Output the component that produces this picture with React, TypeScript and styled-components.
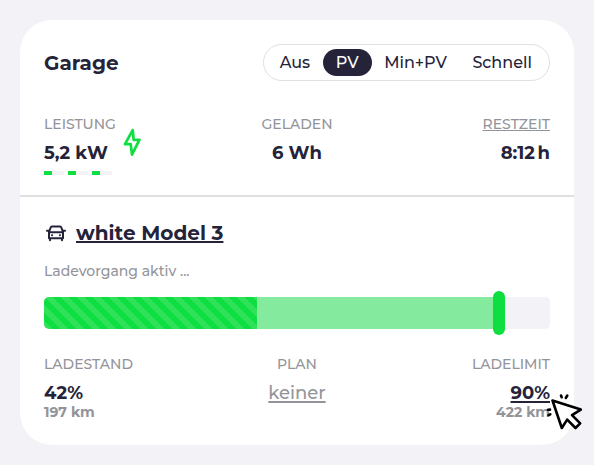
import React from "react";
import styled, { createGlobalStyle } from "styled-components";

const ink = "#24233a";
const gray = "#93949a";
const green = "#0fde41";

const GlobalStyle = createGlobalStyle`
  * { box-sizing: border-box; }
  body {
    margin: 0;
    background: #f2f2f7;
    color: ${ink};
    font-family: Montserrat, Inter, sans-serif;
    overflow: hidden;
  }
`;

const Page = styled.main`
  position: relative;
  width: 594px;
  height: 465px;
  padding: 20px;
`;

const Card = styled.section`
  height: 425px;
  background: #fff;
  border-radius: 32px;
`;

const Loadpoint = styled.div`
  height: 177px;
  padding: 24px 24px 0;
  border-bottom: 2px solid #e0e0e3;
`;

const Vehicle = styled.div`
  padding: 22px 24px 0;
`;

const Header = styled.header`
  display: flex;
  align-items: center;
  justify-content: space-between;
  height: 37px;
`;

const Text = styled.span`
  display: block;
  white-space: nowrap;
`;

const Title = styled(Text)`
  margin: 0;
  font-size: 20px;
  font-weight: 700;
  line-height: 24px;
`;

const ModeGroup = styled.div`
  display: flex;
  align-items: center;
  width: 287px;
  height: 37px;
  padding: 0 4px 0 3px;
  border: 1px solid #e0e0e4;
  border-radius: 19px;
`;

const Mode = styled.button<{ $active?: boolean; $w: number }>`
  display: flex;
  align-items: center;
  justify-content: center;
  width: ${(p) => p.$w}px;
  height: 27px;
  padding: 0;
  border: 0;
  border-radius: 14px;
  background: ${(p) => (p.$active ? ink : "transparent")};
  color: ${(p) => (p.$active ? "#fff" : ink)};
  font: 500 16px/26px Montserrat, Inter, sans-serif;
`;

const Stats = styled.div<{ $top: number }>`
  display: grid;
  grid-template-columns: 1fr 1fr 1fr;
  margin-top: ${(p) => p.$top}px;
`;

const Stat = styled.div<{ $align?: string }>`
  display: flex;
  flex-direction: column;
  align-items: ${(p) => p.$align ?? "flex-start"};
`;

const Label = styled(Text)<{ $underline?: boolean }>`
  color: ${gray};
  font-size: 14px;
  font-weight: 500;
  line-height: 20px;
  text-decoration: ${(p) => (p.$underline ? "underline" : "none")};
  text-decoration-thickness: 1px;
  text-underline-offset: 1px;
`;

const Value = styled(Text)<{ $underline?: boolean }>`
  margin-top: 8px;
  font-size: 18px;
  font-weight: 700;
  line-height: 23px;
  text-decoration: ${(p) => (p.$underline ? "underline" : "none")};
  text-decoration-thickness: 1.5px;
  text-underline-offset: 2px;
`;

const Duration = styled(Value)`
  word-spacing: -2.5px;
`;

const PlanValue = styled(Value)`
  color: ${gray};
  font-weight: 500;
`;

const Range = styled(Text)`
  margin-top: -1px;
  color: ${gray};
  font-size: 14px;
  font-weight: 700;
  line-height: 16px;
`;

const PowerRow = styled.div`
  display: flex;
  gap: 7px;
`;

const BoltIcon = styled.svg`
  width: 18px;
  height: 28px;
  margin-top: 14px;
`;

const Phases = styled.div`
  display: flex;
  gap: 4px;
  margin-top: 6px;
`;

const Phase = styled.i`
  width: 20px;
  height: 4px;
  background: linear-gradient(90deg, ${green} 8px, #f3f3f6 8px);
`;

const VehicleRow = styled.div`
  display: flex;
  align-items: center;
  gap: 8px;
  height: 28px;
`;

const CarIcon = styled.svg`
  width: 24px;
  height: 24px;
`;

const VehicleName = styled(Title)`
  margin-top: -1px;
  text-decoration: underline;
  text-decoration-thickness: 2px;
  text-underline-offset: 1px;
`;

const Status = styled(Text)`
  margin-top: 14px;
  color: ${gray};
  font-size: 14px;
  font-weight: 500;
  line-height: 20px;
`;

const Bar = styled.div`
  position: relative;
  display: flex;
  height: 32px;
  margin-top: 16px;
  border-radius: 5px;
  background: #f2f2f7;
`;

const Charged = styled.div`
  width: 42%;
  border-radius: 5px 0 0 5px;
  background-color: ${green};
  background-image: linear-gradient(
    45deg,
    rgba(255, 255, 255, 0.13) 25%,
    transparent 25%,
    transparent 50%,
    rgba(255, 255, 255, 0.13) 50%,
    rgba(255, 255, 255, 0.13) 75%,
    transparent 75%
  );
  background-size: 16px 16px;
`;

const Remaining = styled.div`
  width: 48%;
  background: #84ea9e;
`;

const LimitHandle = styled.div`
  position: absolute;
  top: -6px;
  left: calc(90% - 6px);
  width: 12px;
  height: 44px;
  border-radius: 6px;
  background: ${green};
`;

const Cursor = styled.svg`
  position: absolute;
  left: 544px;
  top: 391px;
  width: 42px;
  height: 42px;
`;

const modes = [
  { name: "Aus", w: 56 },
  { name: "PV", w: 49, active: true },
  { name: "Min+PV", w: 88 },
  { name: "Schnell", w: 86 },
];

export default function App() {
  return (
    <Page>
      <GlobalStyle />
      <Card>
        <Loadpoint>
          <Header>
            <Title as="h1">Garage</Title>
            <ModeGroup>
              {modes.map((m) => (
                <Mode key={m.name} $w={m.w} $active={m.active}>
                  {m.name}
                </Mode>
              ))}
            </ModeGroup>
          </Header>
          <Stats $top={33}>
            <Stat>
              <PowerRow>
                <div>
                  <Label>LEISTUNG</Label>
                  <Value>5,2 kW</Value>
                </div>
                <BoltIcon viewBox="0 0 18 28" fill="none" stroke={green} strokeWidth="2.7" strokeLinejoin="round">
                  <path d="M9.7 2.2 2 16.2H7.7L9 26.6 16.4 11.8H10.7Z" />
                </BoltIcon>
              </PowerRow>
              <Phases>
                <Phase />
                <Phase />
                <Phase />
              </Phases>
            </Stat>
            <Stat $align="center">
              <Label>GELADEN</Label>
              <Value>6 Wh</Value>
            </Stat>
            <Stat $align="flex-end">
              <Label $underline>RESTZEIT</Label>
              <Duration>8:12 h</Duration>
            </Stat>
          </Stats>
        </Loadpoint>
        <Vehicle>
          <VehicleRow>
            <CarIcon viewBox="0 0 24 24" fill="none" stroke={ink} strokeWidth="2" strokeLinecap="round" strokeLinejoin="round">
              <path d="M5 11 6.7 6.4Q7 5.5 8 5.5H16Q17 5.5 17.3 6.4L19 11M5 11.2H19V17.2H5ZM3 9.7H4.5M19.5 9.7H21M6 18V19.2M18 18V19.2" />
              <path d="M8 14.3H8.1M15.9 14.3H16" />
            </CarIcon>
            <VehicleName as="h2">white Model 3</VehicleName>
          </VehicleRow>
          <Status>Ladevorgang aktiv ...</Status>
          <Bar>
            <Charged />
            <Remaining />
            <LimitHandle />
          </Bar>
          <Stats $top={25}>
            <Stat>
              <Label>LADESTAND</Label>
              <Value>42%</Value>
              <Range>197 km</Range>
            </Stat>
            <Stat $align="center">
              <Label>PLAN</Label>
              <PlanValue $underline>keiner</PlanValue>
            </Stat>
            <Stat $align="flex-end">
              <Label>LADELIMIT</Label>
              <Value $underline>90%</Value>
              <Range>422 km</Range>
            </Stat>
          </Stats>
        </Vehicle>
      </Card>
      <Cursor viewBox="0 0 42 42" fill="none" stroke="#000" strokeWidth="2.6" strokeLinecap="round" strokeLinejoin="round">
        <path fill="#fff" d="M8.5 9.5 17.8 37 23.2 28.6 31.5 37 36.2 32.3 28 24.2 36.8 18.6Z" />
        <path d="M17 4.5 17.7 6.2M23.3 4.5 21.8 7M4 18.8 6 18.6M4.5 24.2 6.3 23.3" />
      </Cursor>
    </Page>
  );
}
